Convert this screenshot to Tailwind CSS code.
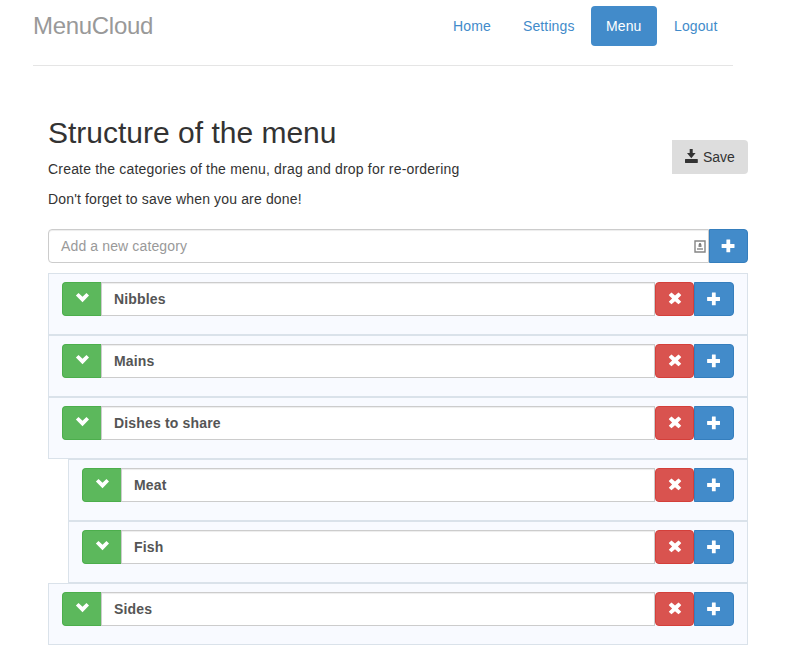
<!DOCTYPE html>
<html lang="en">
<head>
<meta charset="utf-8">
<title>MenuCloud</title>
<script src="https://cdn.jsdelivr.net/npm/@tailwindcss/browser@4"></script>
</head>
<body class="bg-white font-['Liberation_Sans',Arial,sans-serif] text-sm leading-5 text-[#333]">
<svg class="hidden">
  <symbol id="chevron" viewBox="0 0 14 14"><path d="M.9 3.6 3.5 1.1 7.5 4.8 11.5 1.1 14 3.6 7.5 10.3Z"/></symbol>
  <symbol id="plus" viewBox="0 0 14 14"><path d="M5.7.5h3.2q.3 0 .3.3v4.2h4q.3 0 .3.3v3.3q0 .3-.3.3h-4v4q0 .3-.3.3H5.7q-.3 0-.3-.3v-4H.9q-.3 0-.3-.3V5.3q0-.3.3-.3h4.5V.8q0-.3.3-.3Z"/></symbol>
  <symbol id="remove" viewBox="0 0 14 14"><path d="M3.2.7q.3-.3.6 0L7 3.6 10.2.7q.3-.3.6 0L13 2.8q.3.3 0 .6L9.9 6.4 13 9.4q.3.3 0 .6l-2.2 2.1q-.3.3-.6 0L7 9.2 3.8 12.1q-.3.3-.6 0L1 10q-.3-.3 0-.6L4.1 6.4 1 3.4q-.3-.3 0-.6Z"/></symbol>
  <symbol id="save" viewBox="0 0 14 14"><path d="M5.7 0h3v4h2.9L7.3 9.3 3 4h2.7ZM1.4 10h12q.4 0 .4.4v3.2q0 .4-.4.4h-12q-.4 0-.4-.4v-3.2q0-.4.4-.4Z"/></symbol>
</svg>
<header class="ml-[33px] flex h-[66px] w-[700px] justify-between border-b border-[#e5e5e5] pt-1.5">
  <h3 class="h-10 text-2xl leading-10 tracking-[-0.3px] text-[#999]">MenuCloud</h3>
  <nav class="flex h-10 gap-0.5 tracking-[0.12px] text-[#428bca]">
    <a class="w-[68px] py-2.5 pl-[15px]">Home</a>
    <a class="w-[81px] py-2.5 pl-[15px]">Settings</a>
    <a class="w-[66px] rounded bg-[#428bca] py-2.5 pl-[15px] text-white">Menu</a>
    <a class="w-[74px] py-2.5 pl-[15px]">Logout</a>
  </nav>
</header>
<main class="ml-12 w-[700px] pt-[50px]">
  <div class="flex items-start justify-between">
    <div>
      <h2 class="text-[30px] leading-[33px]">Structure of the menu</h2>
      <p class="mt-2.5 tracking-[0.19px]">Create the categories of the menu, drag and drop for re-ordering</p>
      <p class="mt-2.5 tracking-[0.15px]">Don't forget to save when you are done!</p>
    </div>
    <button class="mt-6 flex h-[34px] w-[76px] items-center rounded-r bg-[#ddd] pl-3"><svg class="mr-[5px] h-3.5 w-3.5 -translate-y-px" fill="#333"><use href="#save"/></svg>Save</button>
  </div>
  <div class="mt-5 flex h-[34px]">
    <div class="flex w-[661px] items-center justify-between rounded-l border border-[#ccc] pr-0.5 pl-3 tracking-[0.13px] text-[#999] shadow-[inset_0_1px_1px_rgba(0,0,0,0.075)]"><span>Add a new category</span>
      <svg class="h-[13px] w-3" viewBox="0 0 12 13"><path d="M1 1h10v11H1Z" fill="#fff" stroke="#858585" stroke-width="1.4"/><circle cx="6" cy="4.2" r="1.2" fill="#777"/><path d="M4.5 5h3v2h-3Z" fill="#888"/><path d="M3 8h6v2H3Z" fill="#aaa"/></svg>
    </div>
    <button class="flex w-[39px] items-center justify-center rounded-r border border-[#357ebd] bg-[#428bca]"><svg class="h-3.5 w-3.5 -translate-x-px" fill="#fff"><use href="#plus"/></svg></button>
  </div>
  <ol id="rows" class="mt-2.5"></ol>
</main>
<template id="row">
  <li class="flex h-[62px] border border-[#dae2ea] bg-[#f8faff] px-[13px] pt-2">
    <div class="flex h-[34px] w-full">
      <button class="flex w-[39px] shrink-0 items-center justify-center rounded-l border border-r-0 border-[#4cae4c] bg-[#5cb85c]"><svg class="h-3.5 w-3.5" fill="#fff"><use href="#chevron"/></svg></button>
      <div class="label grow border border-[#ccc] bg-white px-3 py-1.5 font-bold tracking-[0.17px] text-[#555] shadow-[inset_0_1px_1px_rgba(0,0,0,0.075)]"></div>
      <button class="flex w-[39px] shrink-0 items-center justify-center rounded border border-[#d43f3a] bg-[#d9534f]"><svg class="h-3.5 w-3.5" fill="#fff"><use href="#remove"/></svg></button>
      <button class="flex w-10 shrink-0 items-center justify-center rounded-r border border-[#357ebd] bg-[#428bca]"><svg class="h-3.5 w-3.5 -translate-x-[0.5px]" fill="#fff"><use href="#plus"/></svg></button>
    </div>
  </li>
</template>
<script>
  const categories = [['Nibbles', 0], ['Mains', 0], ['Dishes to share', 0], ['Meat', 1], ['Fish', 1], ['Sides', 0]];
  for (const [name, depth] of categories) {
    const row = document.getElementById('row').content.cloneNode(true);
    row.querySelector('.label').textContent = name;
    if (depth) row.querySelector('li').classList.add('ml-5');
    document.getElementById('rows').append(row);
  }
</script>
<!-- nested rows are indented with class="ml-5" -->
</body>
</html>
